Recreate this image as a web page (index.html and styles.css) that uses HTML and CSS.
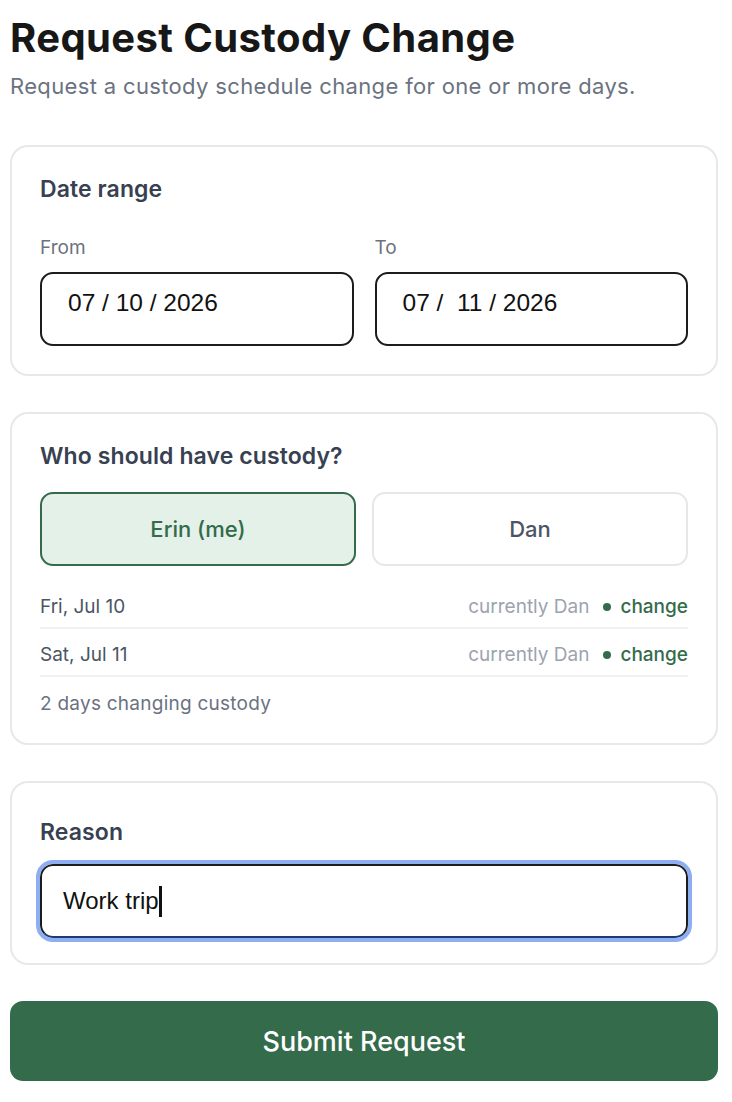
FILE: index.html
```html
<!DOCTYPE html>
<html lang="en">
<head>
<meta charset="utf-8">
<title>Request Custody Change</title>
<link rel="stylesheet" href="styles.css">
</head>
<body>
  <main class="page">
    <h1 class="title">Request Custody Change</h1>
    <p class="subtitle">Request a custody schedule change for one or more days.</p>

    <section class="card">
      <h2 class="card-heading">Date range</h2>
      <div class="date-grid">
        <div class="field">
          <span class="field-label">From</span>
          <div class="date-input">07 / 10 / 2026</div>
        </div>
        <div class="field">
          <span class="field-label">To</span>
          <div class="date-input">07 /&nbsp; 11 / 2026</div>
        </div>
      </div>
    </section>

    <section class="card card-custody">
      <h2 class="card-heading">Who should have custody?</h2>
      <div class="choice-grid">
        <button class="choice choice-active" type="button">Erin (me)</button>
        <button class="choice" type="button">Dan</button>
      </div>
      <ul class="day-list">
        <li class="day-row">
          <span class="day-name">Fri, Jul 10</span>
          <span class="day-status">
            <span class="day-current">currently Dan</span>
            <span class="day-change"><span class="dot"></span>change</span>
          </span>
        </li>
        <li class="day-row">
          <span class="day-name">Sat, Jul 11</span>
          <span class="day-status">
            <span class="day-current">currently Dan</span>
            <span class="day-change"><span class="dot"></span>change</span>
          </span>
        </li>
      </ul>
      <p class="summary">2 days changing custody</p>
    </section>

    <section class="card card-reason">
      <h2 class="card-heading reason-heading">Reason</h2>
      <div class="text-input"><span>Work trip</span><span class="caret"></span></div>
    </section>

    <button class="submit" type="button">Submit Request</button>
  </main>
</body>
</html>
```

FILE: styles.css
```css
* {
  box-sizing: border-box;
}

html, body {
  margin: 0;
  padding: 0;
  background: #ffffff;
}

body {
  font-family: Inter, "Noto Sans", sans-serif;
  color: #171717;
}

.page {
  padding: 14px 14px 20px 10px;
  display: flex;
  flex-direction: column;
}

.title {
  margin: 0 0 9px;
  font-size: 40px;
  line-height: 48px;
  font-weight: 700;
  letter-spacing: 0.4px;
  color: #171717;
}

.subtitle {
  margin: 0 0 44px;
  font-size: 22px;
  line-height: 30px;
  letter-spacing: 0.35px;
  color: #6b7280;
}

.card {
  border: 2px solid #e7e8eb;
  border-radius: 18px;
  padding: 28px 28px 28px;
  margin-bottom: 36px;
  display: flex;
  flex-direction: column;
}

.card-heading {
  margin: 0;
  font-size: 23px;
  line-height: 28px;
  font-weight: 600;
  letter-spacing: 0.1px;
  color: #374151;
}

.date-grid {
  margin-top: 33px;
  display: grid;
  grid-template-columns: 1fr 1fr;
  gap: 21px;
}

.field {
  display: flex;
  flex-direction: column;
  gap: 12px;
}

.field-label {
  font-size: 19px;
  line-height: 24px;
  color: #6b7280;
}

.date-input {
  height: 74px;
  border: 2px solid #1c1c1c;
  border-radius: 13px;
  padding: 14px 26px;
  font-family: "Liberation Sans", Arial, sans-serif;
  font-size: 24.5px;
  line-height: 30px;
  color: #111111;
  white-space: pre;
}

.card-custody {
  padding-bottom: 27px;
}

.choice-grid {
  margin-top: 22px;
  display: grid;
  grid-template-columns: 1fr 1fr;
  gap: 16px;
}

.choice {
  height: 74px;
  border: 2px solid #e5e7eb;
  border-radius: 13px;
  background: #ffffff;
  font-family: Inter, "Noto Sans", sans-serif;
  font-size: 22px;
  font-weight: 500;
  color: #4b5563;
  padding: 0;
}

.choice-active {
  background: #e3f1e8;
  border-color: #336b4b;
  color: #336b4b;
}

.day-list {
  list-style: none;
  margin: 15px 0 0;
  padding: 0;
}

.day-row {
  display: flex;
  justify-content: space-between;
  align-items: center;
  padding: 14px 0 8px;
  border-bottom: 2px solid #f0f1f3;
  font-size: 19px;
  line-height: 24px;
}

.day-name {
  color: #4b5563;
}

.day-status {
  display: flex;
  align-items: center;
  gap: 14px;
}

.day-current {
  color: #9ca3af;
}

.day-change {
  display: flex;
  align-items: center;
  gap: 9px;
  color: #336b4b;
  font-weight: 500;
}

.dot {
  width: 8px;
  height: 8px;
  border-radius: 50%;
  background: #336b4b;
}

.summary {
  margin: 0;
  padding-top: 15px;
  font-size: 19px;
  line-height: 24px;
  letter-spacing: 0.25px;
  color: #6b7280;
}

.card-reason {
  padding-top: 35px;
  padding-bottom: 25px;
}

.reason-heading {
  margin-bottom: 18px;
}

.text-input {
  height: 74px;
  border: 2px solid #1c1c1c;
  border-bottom-color: #1e3a6e;
  border-radius: 13px;
  outline: 4px solid #8eaef2;
  outline-offset: 0;
  padding: 0 21px;
  display: flex;
  align-items: center;
  font-family: "Liberation Sans", Arial, sans-serif;
  font-size: 24px;
  color: #111111;
}

.caret {
  width: 3px;
  height: 31px;
  background: #111111;
}

.submit {
  height: 80px;
  width: 100%;
  border: none;
  border-radius: 13px;
  background: #336b4b;
  color: #ffffff;
  font-family: Inter, "Noto Sans", sans-serif;
  font-size: 27px;
  font-weight: 500;
}
```
